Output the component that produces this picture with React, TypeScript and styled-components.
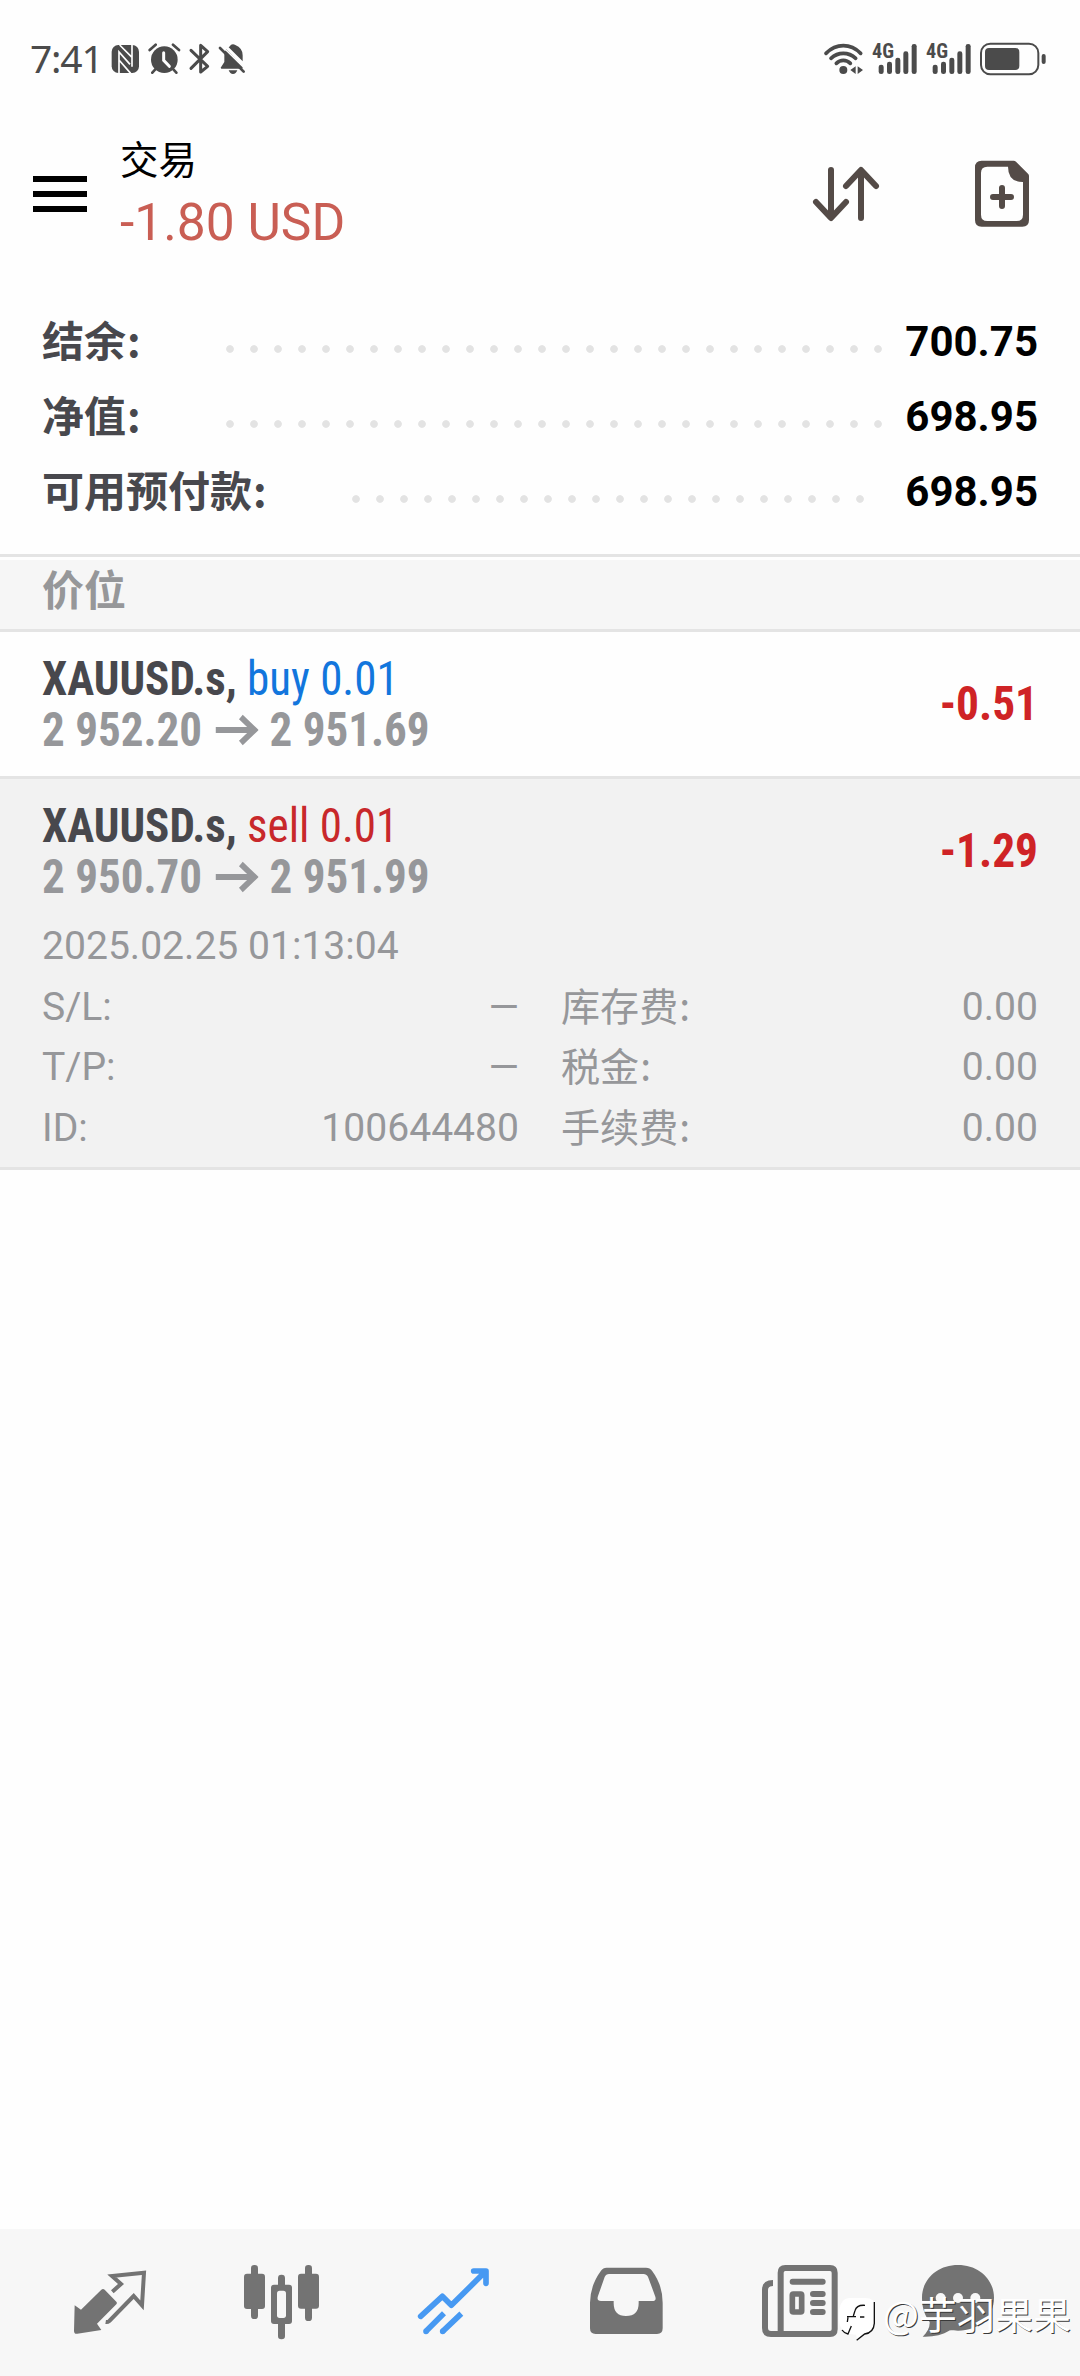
import React from "react";
import styled, { createGlobalStyle } from "styled-components";

const Global = createGlobalStyle`
  * { box-sizing: border-box; }
  body { margin: 0; background: #fefefe; }
`;

const sans = `Roboto, "Noto Sans CJK SC", sans-serif`;
const condensed = `"Roboto Condensed", Roboto, "Noto Sans CJK SC", sans-serif`;

const Screen = styled.div`
  position: relative;
  width: 1080px;
  height: 2376px;
  display: flex;
  flex-direction: column;
  background: #fefefe;
  font-family: ${sans};
  overflow: hidden;
`;

const StatusBar = styled.header`
  height: 118px;
  display: flex;
  align-items: center;
  justify-content: space-between;
  padding: 0 32px 0 30px;
`;

const StatusGroup = styled.div`
  display: flex;
  align-items: center;
`;

const Clock = styled.span`
  width: 80px;
  font-family: "Noto Sans", sans-serif;
  font-size: 39px;
  line-height: 44px;
  margin-top: -2px;
  letter-spacing: -1.2px;
  color: #4b4b4b;
`;

const TitleBar = styled.div`
  height: 176px;
  display: flex;
  align-items: flex-start;
`;

const MenuButton = styled.div`
  display: flex;
  flex-direction: column;
  gap: 9px;
  width: 54px;
  margin: 58px 33px 0 33px;
`;

const MenuLine = styled.span`
  height: 6px;
  background: #000;
`;

const TitleText = styled.div`
  flex: 1;
  padding-top: 16px;
`;

const Title = styled.div`
  font-size: 38.5px;
  line-height: 54px;
  color: #000;
`;

const Total = styled.div`
  font-size: 51.5px;
  line-height: 60px;
  margin-top: 5px;
  color: #c95e54;
`;

const Summary = styled.section`
  height: 260px;
  padding: 10px 42px 0;
`;

const SummaryRow = styled.div`
  display: flex;
  align-items: center;
  height: 75px;
`;

const SummaryLabel = styled.span<{ $width: number }>`
  width: ${(p) => p.$width}px;
  margin-top: -6px;
  font-size: 42px;
  font-weight: 700;
  line-height: 60px;
  font-family: "Noto Sans CJK SC", sans-serif;
  color: #48484d;
`;

const Colon = styled.span`
  margin-left: 1px;
`;

const Dots = styled.span<{ $count: number }>`
  width: ${(p) => p.$count * 24}px;
  height: 8px;
  margin-top: 15px;
  background: radial-gradient(circle at 12px 4px, #e3e3e3 3.4px, transparent 4.2px) 0 0 / 24px 8px;
`;

const SummaryValue = styled.span`
  margin-left: auto;
  font-size: 42px;
  font-weight: 700;
  line-height: 60px;
  color: #000;
`;

const SectionHead = styled.div`
  height: 78px;
  border-top: 3px solid #e4e4e4;
  border-bottom: 3px solid #e4e4e4;
  padding-top: 3px;
`;

const SectionTitle = styled.div`
  height: 69px;
  padding-left: 42px;
  background: #f6f6f6;
  font: 700 42px/55px "Noto Sans CJK SC", sans-serif;
  color: #969799;
`;

const Position = styled.article<{ $open?: boolean }>`
  background: ${(p) => (p.$open ? "#f2f2f2" : "#fefefe")};
  border-bottom: 3px solid #e4e4e4;
  padding: 0 42px;
  height: ${(p) => (p.$open ? 391 : 147)}px;
`;

const PositionTop = styled.div`
  display: flex;
  align-items: center;
  justify-content: space-between;
  height: 144px;
`;

const PositionInfo = styled.div`
  font-family: ${condensed};
  font-size: 48px;
  font-weight: 700;
  line-height: 51px;
  transform: scaleX(0.938);
  transform-origin: left;
`;

const SymbolLine = styled.div`
  color: #48484d;
`;

const Side = styled.span<{ $sell?: boolean }>`
  font-weight: 400;
  color: ${(p) => (p.$sell ? "#c8282b" : "#1276dd")};
`;

const PriceLine = styled.div`
  display: flex;
  align-items: center;
  color: #96979a;
`;

const ArrowIcon = styled.svg`
  width: 46px;
  height: 34px;
  margin: 0 12px 0 14px;
`;

const Profit = styled.span`
  font-family: ${condensed};
  font-size: 48px;
  font-weight: 700;
  margin-top: -2px;
  transform: scaleX(0.945);
  transform-origin: right;
  color: #cf2326;
`;

const Details = styled.div`
  color: #96979a;
  font-size: 39.1px;
  line-height: 60.5px;
  margin-top: -7px;
`;

const DetailRow = styled.div`
  display: grid;
  grid-template-columns: 477px 1fr;
  column-gap: 42px;
`;

const DetailCell = styled.div`
  display: flex;
  justify-content: space-between;
`;

const Label = styled.span<{ $cjk?: boolean }>`
  font-family: ${(p) => (p.$cjk ? `"Noto Sans CJK SC", sans-serif` : sans)};
  margin-top: ${(p) => (p.$cjk ? -3 : 0)}px;
  height: 60px;
`;

const NavBar = styled.nav`
  margin-top: auto;
  height: 147px;
  display: flex;
  padding: 0 24px;
  background: #f7f7f7;
`;

const NavIcon = styled.svg`
  width: 172px;
  height: 147px;
`;

const Watermark = styled.div`
  position: absolute;
  right: 9px;
  bottom: 34px;
  display: flex;
  align-items: center;
  font: 400 38px/56px "Noto Sans CJK SC", sans-serif;
  color: #fff;
  text-shadow: 1px 1px 0 #3a3a3a;
`;

const WatermarkLogo = styled.svg`
  width: 42px;
  height: 46px;
  margin: 2px 3px 0 0;
`;

const WatermarkName = styled.span`
  margin-top: -10px;
`;

const HeaderIconsSvg = styled.svg`
  margin-top: 36px;
`;

const StatusIconsLeft = () => (
  <svg width="140" height="32" viewBox="330 69 420 96" fill="#4b4b4b" stroke="none">
    <rect x="335" y="75" width="82" height="84" rx="20" />
    <path d="M357 160V96L390 133M359 75L396 112V140M396 75V112M357 120L392 160" fill="none" stroke="#fefefe" strokeWidth="5" />
    <circle cx="493" cy="119" r="40" />
    <path d="M449 90L467 74M537 90L519 74M457 158L468 146M529 158L518 146" fill="none" stroke="#4b4b4b" strokeWidth="8" strokeLinecap="round" />
    <path d="M491 98V121L508 139" fill="none" stroke="#fefefe" strokeWidth="9" strokeLinecap="round" />
    <path d="M573 91L623 139L602 156V76L623 95L573 145" fill="none" stroke="#4b4b4b" strokeWidth="9" strokeLinecap="round" strokeLinejoin="round" />
    <path d="M662 143L673 126V104Q673 94 679 88L729 140L727 146H664ZM686 82Q692 78 692 75Q699 70 706 75Q728 84 728 106V124ZM686 151H712Q708 162 699 162Q690 162 686 151Z" />
    <path d="M660 84L731 155" stroke="#4b4b4b" strokeWidth="8" strokeLinecap="round" />
    <path d="M668 80L736 147" stroke="#fefefe" strokeWidth="4" />
  </svg>
);

const NetLabel = styled.text`
  font-family: ${condensed};
  font-size: 59px;
  font-weight: 700;
  fill: #4b4b4b;
`;

const bars = [
  [295, 134],
  [320, 125],
  [345, 113],
  [369, 94],
  [394, 72],
];

const StatusIconsRight = () => (
  <svg width="226" height="36" viewBox="125 63 678 108" fill="#4b4b4b">
    <g fill="none" stroke="#4b4b4b" strokeWidth="11" strokeLinecap="round">
      <path d="M137 100Q160 77 189 77Q218 77 241 100" />
      <path d="M152 115Q168 100 189 100Q210 100 226 115" />
      <path d="M168 130Q177 121 189 121Q201 121 210 130" />
    </g>
    <circle cx="189" cy="150" r="12" />
    <path d="M226 139V162L210 150ZM232 139V162L248 150Z" />
    {[0, 162].map((dx) => (
      <g key={dx} transform={`translate(${dx} 0)`}>
        <NetLabel x="275" y="115" textLength="66" lengthAdjust="spacingAndGlyphs">4G</NetLabel>
        {bars.map(([x, y]) => (
          <rect key={x} x={x} y={y} width="15" height={162 - y} rx="7" />
        ))}
      </g>
    ))}
    <rect x="602" y="71" width="172" height="92" rx="28" fill="none" stroke="#4b4b4b" strokeWidth="6" />
    <rect x="614" y="84" width="103" height="66" rx="12" />
    <rect x="784" y="102" width="12" height="30" rx="6" />
  </svg>
);

const HeaderIcons = () => (
  <HeaderIconsSvg width="300" height="80" viewBox="0 402 900 240" fill="none" stroke="#544b47" strokeWidth="18" strokeLinecap="round" strokeLinejoin="round">
    <path d="M153 450V593M108 546L153 594L198 546" />
    <path d="M243 594V451M198 498L243 450L288 498" />
    <path
      d="M605 422H701Q705 422 708 425L744 461Q747 464 747 468V600Q747 620 727 620H605Q585 620 585 600V442Q585 422 605 422ZM622 440Q603 440 603 459V584Q603 603 622 603H710Q729 603 729 584V486Q684 486 684 440Z"
      fill="#544b47"
      fillRule="evenodd"
      stroke="none"
    />
    <path d="M666 504V558M639 531H693" />
  </HeaderIconsSvg>
);

const Arrow = () => (
  <ArrowIcon viewBox="0 0 46 34" fill="none" stroke="#96979a" strokeWidth="6">
    <path d="M0 17H41M27 4L41.500 17L27 30" />
  </ArrowIcon>
);

type PositionHeadProps = { sell?: boolean; side: string; from: string; to: string; profit: string };

const PositionHead = ({ sell, side, from, to, profit }: PositionHeadProps) => (
  <PositionTop>
    <PositionInfo>
      <SymbolLine>
        XAUUSD.s, <Side $sell={sell}>{side} 0.01</Side>
      </SymbolLine>
      <PriceLine>
        <span>{from}</span>
        <Arrow />
        <span>{to}</span>
      </PriceLine>
    </PositionInfo>
    <Profit>{profit}</Profit>
  </PositionTop>
);

const summary = [
  { label: "结余", value: "700.75", width: 176, dots: 28 },
  { label: "净值", value: "698.95", width: 176, dots: 28 },
  { label: "可用预付款", value: "698.95", width: 302, dots: 22 },
];

const details = [
  ["S/L:", "—", "库存费", "0.00"],
  ["T/P:", "—", "税金", "0.00"],
  ["ID:", "100644480", "手续费", "0.00"],
];

const gray = "#737373";

const Nav = () => (
  <NavBar>
    <NavIcon viewBox="-48 39 516 441">
      <path d="M104 268L123 281L184 221Q189 217 194 221L229 257Q233 261 229 265L171 323L184 342L112 353Q102 355 102 344Z" fill={gray} />
      <path d="M217 227L243 204L216 180L312 170L306 268L281 240L208 315Q203 319 197 318" fill="none" stroke={gray} strokeWidth="12" />
    </NavIcon>
    <NavIcon viewBox="468 39 516 441" fill={gray}>
      <rect x="633" y="147" width="21" height="162" rx="10" />
      <rect x="612" y="173" width="63" height="106" rx="9" />
      <rect x="795" y="147" width="21" height="168" rx="10" />
      <rect x="774" y="173" width="63" height="105" rx="9" />
      <rect x="714" y="176" width="21" height="194" rx="10" />
      <rect x="693" y="206" width="63" height="118" rx="9" />
      <rect x="711" y="224" width="27" height="82" rx="8" fill="#f7f7f7" />
    </NavIcon>
    <NavIcon viewBox="-66 39 516 441" fill="none" stroke="#4799f2" strokeWidth="17" strokeLinejoin="round">
      <path d="M92 301L157 241L184 268L287 166M251 165H288V202" strokeLinecap="round" />
      <path d="M162 292L108 346M214 293L158 346" />
      <path d="M108 346L108 346.100M158 346L158 346.100" strokeLinecap="round" />
    </NavIcon>
    <NavIcon viewBox="450 39 516 441">
      <path
        d="M650 155H768Q780 155 786 164Q818 207 818 260V337Q818 354 801 354H617Q600 354 600 337V260Q601 207 633 164Q639 155 650 155ZM657 174Q648 174 644 183L624 240Q619 255 633 255H671V262Q671 300 708 300Q746 300 746 262V255H786Q800 255 796 242L775 185Q771 174 760 174Z"
        fill={gray}
        fillRule="evenodd"
      />
    </NavIcon>
    <NavIcon viewBox="-84 39 516 441" fill="none" stroke={gray} strokeWidth="18">
      <path d="M99 201Q75 201 75 222V336Q75 354 93 354H270Q284 354 284 340V170Q284 156 270 156H136Q122 156 122 170V348" />
      <path d="M158 197H248M219 234H248M219 261H248M219 288H248" strokeLinecap="round" />
      <rect x="157" y="234" width="28" height="54" rx="3" strokeWidth="17" />
    </NavIcon>
    <NavIcon viewBox="432 39 516 441">
      <path d="M654 147C716 147 762 190 762 245C762 303 716 344 654 344C645 344 638 344 630 343C606 358 580 363 548 362C562 348 570 334 569 318C554 298 546 274 546 245C546 190 592 147 654 147Z" fill={gray} />
      <g fill="#f7f7f7">
        <circle cx="602" cy="246" r="15" />
        <circle cx="654" cy="246" r="15" />
        <circle cx="706" cy="246" r="15" />
      </g>
    </NavIcon>
  </NavBar>
);

export default function App() {
  return (
    <Screen>
      <Global />
      <StatusBar>
        <StatusGroup>
          <Clock>7:41</Clock>
          <StatusIconsLeft />
        </StatusGroup>
        <StatusIconsRight />
      </StatusBar>
      <TitleBar>
        <MenuButton>
          <MenuLine />
          <MenuLine />
          <MenuLine />
        </MenuButton>
        <TitleText>
          <Title>交易</Title>
          <Total>-1.80 USD</Total>
        </TitleText>
        <HeaderIcons />
      </TitleBar>
      <Summary>
        {summary.map((row) => (
          <SummaryRow key={row.label}>
            <SummaryLabel $width={row.width}>
              {row.label}
              <Colon>:</Colon>
            </SummaryLabel>
            <Dots $count={row.dots} />
            <SummaryValue>{row.value}</SummaryValue>
          </SummaryRow>
        ))}
      </Summary>
      <SectionHead>
        <SectionTitle>价位</SectionTitle>
      </SectionHead>
      <Position>
        <PositionHead side="buy" from="2 952.20" to="2 951.69" profit="-0.51" />
      </Position>
      <Position $open>
        <PositionHead sell side="sell" from="2 950.70" to="2 951.99" profit="-1.29" />
        <Details>
          <div>2025.02.25 01:13:04</div>
          {details.map(([a, b, c, d]) => (
            <DetailRow key={a}>
              <DetailCell>
                <Label>{a}</Label>
                <span>{b}</span>
              </DetailCell>
              <DetailCell>
                <Label $cjk>
                  {c}
                  <Colon>:</Colon>
                </Label>
                <span>{d}</span>
              </DetailCell>
            </DetailRow>
          ))}
        </Details>
      </Position>
      <Nav />
      <Watermark>
        <WatermarkLogo viewBox="26 44 126 138">
          <path d="M60 50H108Q137 50 137 78V126Q134 155 106 158L84 178L80 160Q28 160 28 108Q28 52 60 50Z" fill="#fff" />
          <path
            d="M135 62V126Q133 154 106 158L82 177M38 146Q44 155 56 158L66 134M107 72Q82 70 77 88L72 104M53 106H80M92 107H105M56 108L54 122"
            fill="none"
            stroke="#111"
            strokeWidth="4"
          />
        </WatermarkLogo>
        <WatermarkName>@芋羽果果</WatermarkName>
      </Watermark>
    </Screen>
  );
}
